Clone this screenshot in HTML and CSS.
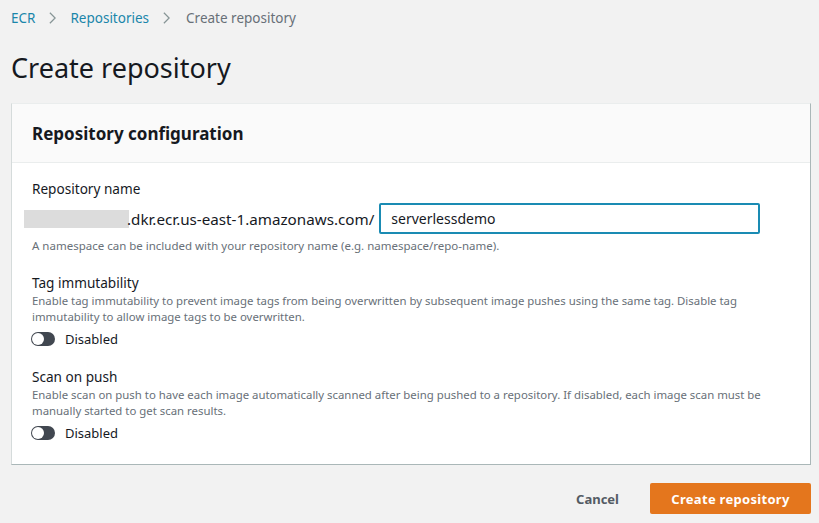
FILE: index.html
```html
<!DOCTYPE html>
<html>
<head>
<meta charset="utf-8">
<link rel="stylesheet" href="styles.css">
</head>
<body>
<div class="page">
  <nav class="crumbs">
    <a class="crumb-link">ECR</a>
    <svg class="chev" viewBox="0 0 10 16" width="9" height="14"><path d="M2 2 L8 8 L2 14" fill="none" stroke="#879596" stroke-width="1.4"/></svg>
    <a class="crumb-link">Repositories</a>
    <svg class="chev" viewBox="0 0 10 16" width="9" height="14"><path d="M2 2 L8 8 L2 14" fill="none" stroke="#879596" stroke-width="1.4"/></svg>
    <span class="crumb-current">Create repository</span>
  </nav>
  <h1 class="title">Create repository</h1>

  <section class="card">
    <header class="card-head">
      <h2 class="card-title">Repository configuration</h2>
    </header>
    <div class="card-body">
      <div class="field">
        <div class="label">Repository name</div>
        <div class="repo-row">
          <span class="blur"></span>
          <span class="prefix">.dkr.ecr.us-east-1.amazonaws.com/</span>
          <div class="input">serverlessdemo</div>
        </div>
        <div class="hint">A namespace can be included with your repository name (e.g. namespace/repo-name).</div>
      </div>

      <div class="field">
        <div class="label">Tag immutability</div>
        <div class="desc">Enable tag immutability to prevent image tags from being overwritten by subsequent image pushes using the same tag. Disable tag immutability to allow image tags to be overwritten.</div>
        <div class="toggle-row">
          <span class="toggle"><span class="knob"></span></span>
          <span class="toggle-label">Disabled</span>
        </div>
      </div>

      <div class="field">
        <div class="label">Scan on push</div>
        <div class="desc">Enable scan on push to have each image automatically scanned after being pushed to a repository. If disabled, each image scan must be manually started to get scan results.</div>
        <div class="toggle-row">
          <span class="toggle"><span class="knob"></span></span>
          <span class="toggle-label">Disabled</span>
        </div>
      </div>
    </div>
  </section>

  <div class="actions">
    <button class="btn-cancel">Cancel</button>
    <button class="btn-primary">Create repository</button>
  </div>
</div>
</body>
</html>
```

FILE: styles.css
```css
html, body {
  margin: 0;
  padding: 0;
  background: #f2f2f2;
  font-family: "Noto Sans", "Open Sans", sans-serif;
  color: #16191f;
}
.page {
  padding: 8px 8px 0 11px;
}
.crumbs {
  display: flex;
  align-items: center;
  height: 20px;
  font-size: 13.5px;
}
.crumb-link {
  color: #1a86aa;
}
.chev {
  margin: 0 13px 0 13px;
}
.crumb-current {
  color: #687078;
  margin-left: 2px;
}
.title {
  margin: 22px 0 0 0;
  font-size: 27px;
  line-height: 36px;
  font-weight: 400;
  color: #16191f;
}
.card {
  margin-top: 17px;
  width: 800px;
  background: #fff;
  border-left: 1px solid #d5dbdb;
  border-right: 1px solid #aab7b8;
  border-bottom: 1px solid #aab7b8;
  border-top: 1px solid #eaeded;
  box-sizing: border-box;
}
.card-head {
  background: #fafafa;
  border-bottom: 1px solid #eaeded;
  height: 58px;
  display: flex;
  align-items: center;
  padding: 0 20px;
}
.card-title {
  margin: 0;
  font-size: 17px;
  font-weight: 700;
  color: #16191f;
}
.card-body {
  padding: 16px 20px 22px 20px;
}
.field {
  margin-bottom: 19px;
}
.field:last-child {
  margin-bottom: 0;
}
.label {
  font-size: 13.6px;
  line-height: 20px;
  color: #16191f;
}
.repo-row {
  display: flex;
  align-items: center;
  margin-top: 4px;
  margin-left: -8px;
}
.blur {
  width: 105px;
  height: 18px;
  background: #dcdcdc;
}
.prefix {
  font-size: 15.2px;
  color: #16191f;
  margin-left: -2px;
}
.input {
  margin-left: 5px;
  width: 381px;
  height: 31px;
  box-sizing: border-box;
  border: 2px solid #1a8bb3;
  border-radius: 2px;
  font-size: 14px;
  padding: 0 10px;
  display: flex;
  align-items: center;
}
.hint {
  font-size: 11.5px;
  line-height: 16px;
  color: #687078;
  margin-top: 4px;
}
.desc {
  font-size: 11.4px;
  line-height: 16px;
  color: #687078;
}
.toggle-row {
  display: flex;
  align-items: center;
  margin-top: 5px;
}
.toggle {
  width: 24px;
  height: 14px;
  border-radius: 7px;
  background: #414750;
  position: relative;
  display: inline-block;
  margin-left: -1px;
}
.knob {
  position: absolute;
  left: 1px;
  top: 1px;
  width: 12px;
  height: 12px;
  border-radius: 50%;
  background: #fff;
}
.toggle-label {
  font-size: 13px;
  margin-left: 10px;
}
.actions {
  display: flex;
  justify-content: flex-end;
  align-items: center;
  margin-top: 18px;
}
.btn-cancel {
  background: none;
  border: none;
  font-family: inherit;
  font-size: 13px;
  font-weight: 700;
  color: #545b64;
  padding: 0 20px;
  margin-right: 11px;
}
.btn-primary {
  background: #e4761d;
  border: none;
  border-radius: 2px;
  color: #fff;
  font-family: inherit;
  font-size: 13px;
  font-weight: 700;
  width: 161px;
  height: 31px;
  letter-spacing: 0.3px;
}
```
